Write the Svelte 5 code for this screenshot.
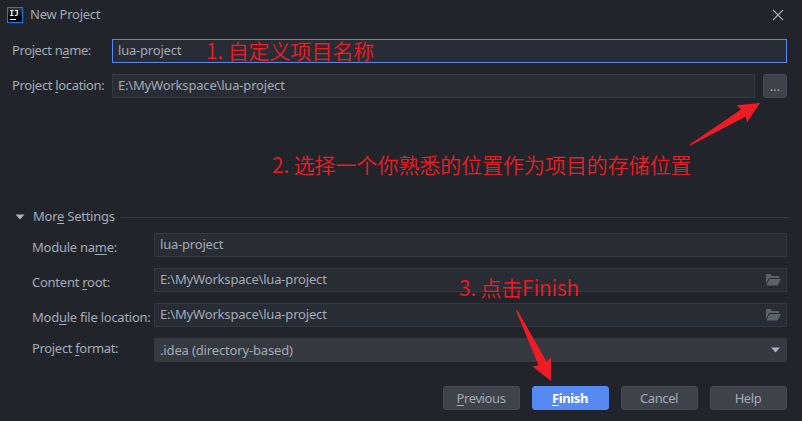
<script>
  const path = 'E:\\MyWorkspace\\lua-project';
  const settings = [
    { pre: 'Module na', key: 'm', post: 'e:', value: 'lua-project', folder: false },
    { pre: 'Content ', key: 'r', post: 'oot:', value: path, folder: true },
    { pre: 'Mod', key: 'u', post: 'le file location:', value: path, folder: true }
  ];
  const buttons = [
    { key: 'P', text: 'revious', kind: '' },
    { key: 'F', text: 'inish', kind: 'primary' },
    { key: '', text: 'Cancel', kind: '' },
    { key: '', text: 'Help', kind: '' }
  ];
</script>

<div class="dialog">
  <header>
    <svg class="logo" width="16" height="16" viewBox="0 0 16 16">
      <defs><linearGradient id="ij" x2="0" y2="1"><stop stop-color="#3a3d42" /><stop offset=".6" stop-color="#050607" /></linearGradient></defs>
      <rect x=".5" y=".5" width="15" height="15" fill="url(#ij)" stroke="#087cfa" />
      <path d="M3 3.5h3.5M4.75 3.5v5M3 8.5h3.5M8 3.5h3M10.3 3.5v3.6q0 1.4-1.3 1.4H7.8" fill="none" stroke="#fff" stroke-width="1.2" />
      <path d="M3 12.5h6" stroke="#fff" />
    </svg>
    <span class="title">New Project</span>
    <svg class="close" width="12" height="12" viewBox="0 0 12 12"><path d="M1 1l10 10M11 1L1 11" stroke="#a9adb3" stroke-width="1.1" /></svg>
  </header>

  <div class="row top">
    <label for="name">Project n<u>a</u>me:</label>
    <div class="field focus" id="name"><span class="lua">lua-project</span></div>
  </div>
  <div class="row top second">
    <label for="location">Project <u>l</u>ocation:</label>
    <div class="field" id="location"><span class="path">{path}</span></div>
    <button class="browse">...</button>
  </div>

  <div class="more">
    <svg width="10" height="6" viewBox="0 0 10 6"><path d="M.5.5h9L5 5.5z" fill="#abb2bf" /></svg>
    <span>Mor<u>e</u> Settings</span>
    <i></i>
  </div>

  <div class="settings">
    {#each settings as s}
      <div class="row">
        <label for="f">{s.pre}<u>{s.key}</u>{s.post}</label>
        <div class="field">
          <span class={s.folder ? 'path' : 'lua'}>{s.value}</span>
          {#if s.folder}
            <svg class="folder" width="16" height="12" viewBox="0 0 16 12">
              <path d="M1 0h4.5L7 2h7v2H4L1 10z" fill="#5a626b" />
              <path d="M4.5 5H16l-3.5 6.500H1.300z" fill="#5a626b" />
            </svg>
          {/if}
        </div>
      </div>
    {/each}
    <div class="row format">
      <label for="f">Project <u>f</u>ormat:</label>
      <div class="select">
        <span>.idea (directory-based)</span>
        <svg width="9" height="6" viewBox="0 0 9 6"><path d="M0 .5h9L4.5 5.5z" fill="#abb2bf" /></svg>
      </div>
    </div>
  </div>

  <footer>
    {#each buttons as b}
      <button class={b.kind}>{#if b.key}<u>{b.key}</u>{/if}{b.text}</button>
    {/each}
  </footer>

  <div class="note one">1. 自定义项目名称</div>
  <div class="note two">2. 选择一个你熟悉的位置作为项目的存储位置</div>
  <div class="note three">3. 点击Finish</div>
  <svg class="arrows" width="802" height="421" viewBox="0 0 802 421" fill="#ee1c25">
    <path d="M689.3 144.7L741 109.5L736.7 105.2L760 103L747 122.5L745.8 116.5L690 145.7Z" />
    <path d="M516 310.5L517.3 310L546.5 361.5L551 357.5L551 381L532.5 366.5L538.5 365.5Z" />
  </svg>
</div>

<style>
  :global(body) { background: #21252b; }
  .dialog {
    position: relative; box-sizing: border-box; width: 802px; height: 421px; overflow: hidden;
    background: #21252b; color: #a4abb6;
    font: 13px/16px 'Noto Sans', 'Open Sans', sans-serif; letter-spacing: -.25px;
  }
  header { display: flex; align-items: center; height: 29px; padding: 0 18px 0 7px; margin-bottom: 10px; }
  .title { margin: -1px 0 0 7px; flex: 1; }
  .row { display: flex; align-items: center; }
  .top { padding: 0 15px 0 12px; }
  .top label { width: 100px; padding-bottom: 2px; letter-spacing: -.4px; }
  .top.second label { letter-spacing: -.33px; }
  .second { margin-top: 11px; }
  label { flex: none; white-space: nowrap; }
  u { text-decoration: underline; text-underline-offset: 2px; text-decoration-thickness: 1px; text-decoration-skip-ink: none; }
  .field {
    box-sizing: border-box; flex: 1; height: 24px; display: flex; align-items: center;
    justify-content: space-between; padding: 0 5px; border: 1px solid #333841; background: #282c34;
  }
  .field span { padding-bottom: 2px; }
  .lua { letter-spacing: -.2px; }
  .path { letter-spacing: -.18px; }
  .focus { border-color: #568af2; }
  button {
    box-sizing: border-box; height: 24px; padding: 0 1px 0 0; border: 1px solid #464b55; border-radius: 3px;
    background: #3d424b; color: #a4abb6; font: inherit; letter-spacing: -.4px;
  }
  .browse { width: 24px; margin-left: 8px; padding: 0; letter-spacing: 0; }
  .more { display: flex; align-items: center; height: 16px; margin-top: 111px; padding: 0 12px 0 15px; }
  .more svg { margin-top: -1px; }
  .more span { margin: -2px 6px 0 8px; }
  .more i { flex: 1; height: 1px; background: #333841; }
  .settings { display: flex; flex-direction: column; gap: 11px; padding: 8px 15px 0 32px; }
  .settings label { width: 122px; padding-top: 3px; }
  .settings .format label { padding: 0 0 4px; letter-spacing: -.33px; }
  .select {
    box-sizing: border-box; flex: 1; height: 24px; display: flex; align-items: center; justify-content: space-between;
    padding: 0 7px 0 6px; border-radius: 2px; background: #353940; letter-spacing: -.15px;
  }
  footer { display: flex; justify-content: flex-end; gap: 12px; padding: 24px 15px 0 0; }
  footer button { width: 77px; }
  .primary { background: #568af2; border-color: #568af2; color: #fff; font-weight: 700; }
  .note { position: absolute; white-space: nowrap; color: #ee1c25; font: 350 21px/30px 'Noto Sans CJK SC', sans-serif; letter-spacing: -.06px; }
  .one { left: 206px; top: 35px; }
  .two { left: 272px; top: 149px; }
  .three { left: 459px; top: 272px; letter-spacing: -.15px; }
  .arrows { position: absolute; left: 0; top: 0; pointer-events: none; }
</style>
